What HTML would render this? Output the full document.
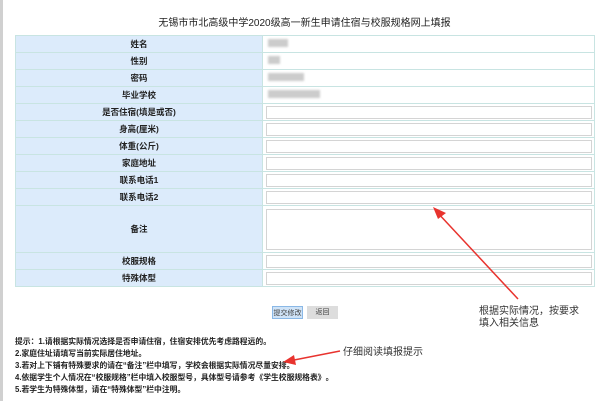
<!DOCTYPE html>
<html><head><meta charset="utf-8"><style>
body{margin:0;width:609px;height:401px;background:#fff;position:relative;overflow:hidden;font-family:"Liberation Sans","Noto Sans CJK SC",sans-serif;}
.lb{position:absolute;left:0;top:0;width:3px;height:401px;background:#d0d0d0;}
.title{position:absolute;top:14px;left:0;width:609px;text-align:center;font-size:10px;color:#222;}
table{position:absolute;left:15px;top:35px;width:580px;border-collapse:collapse;}
td{border:1px solid #c8e4e2;height:16px;padding:0;font-size:8.5px;font-weight:bold;color:#222;}
td.l{width:246px;background:#dcebfb;text-align:center;}
td.v{background:#fff;}
.in{margin-left:3px;width:324px;height:11px;border:1px solid #d4d4d4;}
.ta{margin-left:3px;width:324px;height:39px;border:1px solid #d4d4d4;}
.bl{display:inline-block;background:#ccc;height:8px;margin-left:5px;filter:blur(1px);}
.btn{position:absolute;top:306px;height:13px;font-size:7px;line-height:13px;text-align:center;color:#444;white-space:nowrap;overflow:hidden;}
.tips{position:absolute;left:15px;top:336px;font-size:7.8px;font-weight:bold;color:#222;line-height:12px;white-space:nowrap;}
.ann{position:absolute;font-size:10px;color:#333;line-height:12px;}
</style></head><body>
<div class="lb"></div>
<div class="title">无锡市市北高级中学2020级高一新生申请住宿与校服规格网上填报</div>
<table>
<tr><td class="l">姓名</td><td class="v"><span class="bl" style="width:20px"></span></td></tr>
<tr><td class="l">性别</td><td class="v"><span class="bl" style="width:12px"></span></td></tr>
<tr><td class="l">密码</td><td class="v"><span class="bl" style="width:36px"></span></td></tr>
<tr><td class="l">毕业学校</td><td class="v"><span class="bl" style="width:52px"></span></td></tr>
<tr><td class="l">是否住宿(填是或否)</td><td class="v"><div class="in"></div></td></tr>
<tr><td class="l">身高(厘米)</td><td class="v"><div class="in"></div></td></tr>
<tr><td class="l">体重(公斤)</td><td class="v"><div class="in"></div></td></tr>
<tr><td class="l">家庭地址</td><td class="v"><div class="in"></div></td></tr>
<tr><td class="l">联系电话1</td><td class="v"><div class="in"></div></td></tr>
<tr><td class="l">联系电话2</td><td class="v"><div class="in"></div></td></tr>
<tr><td class="l" style="height:46px">备注</td><td class="v"><div class="ta"></div></td></tr>
<tr><td class="l">校服规格</td><td class="v"><div class="in"></div></td></tr>
<tr><td class="l">特殊体型</td><td class="v"><div class="in"></div></td></tr>
</table>
<div class="btn" style="left:272px;width:31px;background:#cfe3f7;border:1px solid #8ab8e6;box-sizing:border-box;">提交修改</div>
<div class="btn" style="left:307px;width:31px;background:#ddd;">返回</div>
<div class="tips">提示：1.请根据实际情况选择是否申请住宿，住宿安排优先考虑路程远的。<br>2.家庭住址请填写当前实际居住地址。<br>3.若对上下铺有特殊要求的请在“备注”栏中填写，学校会根据实际情况尽量安排。<br>4.依据学生个人情况在“校服规格”栏中填入校服型号，具体型号请参考《学生校服规格表》。<br>5.若学生为特殊体型，请在“特殊体型”栏中注明。</div>
<div class="ann" style="left:479px;top:306px;">根据实际情况，按要求<br>填入相关信息</div>
<div class="ann" style="left:343px;top:347px;">仔细阅读填报提示</div>
<svg style="position:absolute;left:0;top:0" width="609" height="401">
<line x1="518" y1="299" x2="436" y2="211" stroke="#e8332e" stroke-width="1.5"/>
<polygon points="433,207 446,213 438,219" fill="#e8332e"/>
<line x1="340" y1="351" x2="289" y2="361" stroke="#e8332e" stroke-width="1.5"/>
<polygon points="283,362 294,355 296,365" fill="#e8332e"/>
</svg>
</body></html>
